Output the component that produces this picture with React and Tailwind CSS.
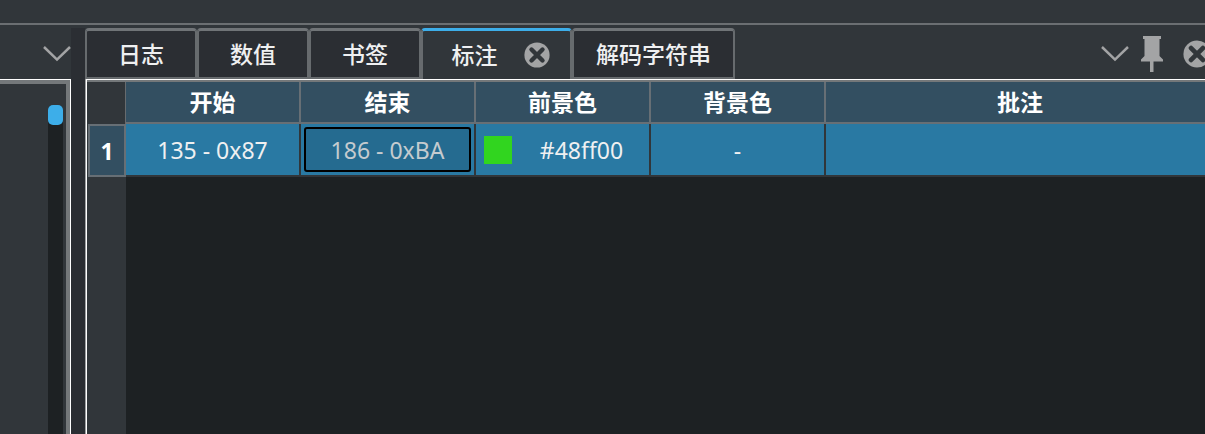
import React, { useState } from "react";

const TABS = [
  { id: "log", label: "日志", width: "w-28" },
  { id: "values", label: "数值", width: "w-28" },
  { id: "bookmarks", label: "书签", width: "w-28" },
  { id: "notes", label: "标注", width: "w-[151px] pl-2", closable: true },
  { id: "strings", label: "解码字符串", width: "w-[163px]" },
];

const COLUMNS = ["开始", "结束", "前景色", "背景色", "批注"];

function ChevronIcon() {
  return (
    <svg className="block h-4 w-7" viewBox="0 0 28 16" fill="none" stroke="#a3a4a5" strokeWidth="2.5">
      <path d="M1 1 14 13.6 27 1" />
    </svg>
  );
}

function PinIcon() {
  return (
    <svg className="block h-9 w-[22px]" viewBox="0 0 22 36" fill="#a3a4a5">
      <path d="M2 0h18v3h-1.5v17l3.5 3.5v2H12.5v10.5h-3.500V25.500H0v-2l3.500-3.500V3H2z" />
    </svg>
  );
}

function CloseIcon({ className }) {
  return (
    <svg className={className} viewBox="0 0 26 26">
      <circle cx="13" cy="13" r="12.6" fill="#a3a4a5" />
      <path d="M7.500 7.500 18.500 18.500M18.500 7.500 7.500 18.500" stroke="#31363a" strokeWidth="4.400" strokeLinecap="round" />
    </svg>
  );
}

function Tab({ tab, active, onSelect }) {
  const look = active
    ? "border-t-[#3daee9] border-b-0 bg-[#31363a]"
    : "border-t-[#707477] border-b-2 bg-[#2b2e33]";
  return (
    <div
      className={`flex shrink-0 items-center justify-center gap-[26px] rounded-t-[4px] border-x-2 border-t-[3px] border-x-[#676b6e] border-b-[#676b6e] ${tab.width} ${look}`}
    >
      <button type="button" role="tab" aria-selected={active} onClick={onSelect} className="whitespace-nowrap font-medium">
        {tab.label}
      </button>
      {tab.closable && (
        <button type="button" aria-label="关闭标注">
          <CloseIcon className="block size-[26px]" />
        </button>
      )}
    </div>
  );
}

export default function App() {
  const [active, setActive] = useState("notes");
  const [end, setEnd] = useState("186 - 0xBA");

  return (
    <div className="flex min-h-screen flex-col overflow-hidden bg-[#31363a] font-['Noto_Sans','Noto_Sans_CJK_SC',sans-serif] text-[23px] leading-8 text-[#eff0f1]">
      <header className="h-[25px] shrink-0 border-b-2 border-[#6b6f72]" />
      <div className="flex flex-1 pt-[3px]">
        <aside className="flex w-[71px] shrink-0 flex-col">
          <div className="flex h-[51px] items-center justify-end">
            <button type="button" aria-label="面板选项">
              <ChevronIcon />
            </button>
          </div>
          <div className="flex flex-1 border-t border-r border-white">
            <div className="flex flex-1 justify-end border-t-4 border-r-4 border-[#74787a] pt-[21px] pr-[3px]">
              <div className="w-[15px] rounded-t-[5px] bg-[#1d2123]">
                <div className="h-5 rounded-[5px] bg-[#3daee9]" />
              </div>
            </div>
          </div>
        </aside>

        <div className="w-3.5 shrink-0 bg-[#2b2e33]" />

        <main className="-mr-[9px] flex min-w-0 flex-1 flex-col">
          <div className="flex h-[51px] justify-between">
            <div role="tablist" className="flex">
              {TABS.map((tab) => (
                <Tab key={tab.id} tab={tab} active={tab.id === active} onSelect={() => setActive(tab.id)} />
              ))}
            </div>
            <div className="flex items-center gap-3 pr-[3px]">
              <button type="button" aria-label="窗口列表">
                <ChevronIcon />
              </button>
              <button type="button" aria-label="固定">
                <PinIcon />
              </button>
              <button type="button" aria-label="关闭面板" className="ml-2">
                <CloseIcon className="block size-7" />
              </button>
            </div>
          </div>

          <div className="flex flex-1 border-l border-[#a0a2a3]">
            <div className="flex min-w-0 flex-1 flex-col border-t border-l border-white">
              <div className="border-t-2 border-[#74787a] pl-px">
                <table className="w-full table-fixed border-separate border-spacing-0 text-center">
                  <colgroup>
                    <col className="w-[38px]" />
                    <col className="w-[175px]" />
                    <col className="w-[175px]" />
                    <col className="w-[175px]" />
                    <col className="w-[175px]" />
                    <col />
                  </colgroup>
                  <thead>
                    <tr className="h-[42px]">
                      <td className="border-r border-[#676b6e] p-0" />
                      {COLUMNS.map((name) => (
                        <th
                          key={name}
                          scope="col"
                          className="border-r-2 border-b-2 border-[#676f75] bg-[#334f61] p-0 font-bold text-white last:border-r-0"
                        >
                          {name}
                        </th>
                      ))}
                    </tr>
                  </thead>
                  <tbody>
                    <tr className="h-[53px]">
                      <th scope="row" className="border-2 border-[#676f75] bg-[#334f61] p-0 font-bold text-white">
                        1
                      </th>
                      <td className="border-r-2 border-b-2 border-[#31363a] bg-[#2979a3] p-0">135 - 0x87</td>
                      <td className="border-r-2 border-b-2 border-[#31363a] bg-[#2979a3] px-[3px] py-0">
                        <input
                          aria-label="结束"
                          value={end}
                          onChange={(e) => setEnd(e.target.value)}
                          className="block h-[45px] w-full rounded-[3px] border-2 border-black bg-[#256b90] text-center text-[#c5cbcf] outline-none"
                        />
                      </td>
                      <td className="border-r-2 border-b-2 border-[#31363a] bg-[#2979a3] p-0">
                        <div className="flex items-center pl-2">
                          <span className="size-7 bg-[#31d51f]" />
                          <span className="flex-1 pl-0.5">#48ff00</span>
                        </div>
                      </td>
                      <td className="border-r-2 border-b-2 border-[#31363a] bg-[#2979a3] p-0">-</td>
                      <td className="border-b-2 border-[#31363a] bg-[#2979a3] p-0" />
                    </tr>
                  </tbody>
                </table>
              </div>
              <div className="flex flex-1">
                <div className="w-[39px]" />
                <div className="flex-1 bg-[#1d2123]" />
              </div>
            </div>
          </div>
        </main>
      </div>
    </div>
  );
}
